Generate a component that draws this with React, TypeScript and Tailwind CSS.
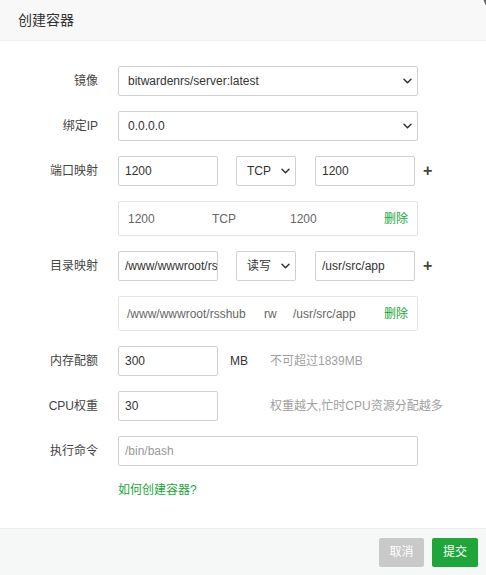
import React from 'react';

const Chevron = () => (
  <svg className="pointer-events-none absolute right-[6px] top-1/2 -translate-y-1/2" width="9" height="6" viewBox="0 0 9 6" fill="none">
    <path d="M1 1.2 4.5 4.7 8 1.2" stroke="#333" strokeWidth="1.5" strokeLinecap="round" strokeLinejoin="round" />
  </svg>
);

const Select = ({ value, width, pad = 'pl-[9px]' }: { value: string; width: string; pad?: string }) => (
  <div className={`relative ${width} h-[30px] shrink-0`}>
    <select
      defaultValue={value}
      className={`h-full w-full appearance-none rounded-[2px] border border-[#d0d0d0] bg-white ${pad} text-[12px] text-[#333] outline-none`}
    >
      <option value={value}>{value}</option>
    </select>
    <Chevron />
  </div>
);

const Input = ({ value, placeholder, width }: { value?: string; placeholder?: string; width: string }) => (
  <input
    defaultValue={value}
    placeholder={placeholder}
    className={`${width} h-[30px] shrink-0 rounded-[2px] border border-[#d0d0d0] bg-white pl-[6px] text-[12px] text-[#333] outline-none placeholder:text-[#999]`}
  />
);

const Row = ({ label, children }: { label?: string; children: React.ReactNode }) => (
  <div className="flex items-center">
    <label className="w-[98px] shrink-0 text-right text-[12px] text-[#444]">{label}</label>
    <div className="ml-[20px] flex items-center">{children}</div>
  </div>
);

export default function App() {
  return (
    <div
      className="relative flex h-[575px] w-[486px] flex-col overflow-hidden bg-white"
      style={{ fontFamily: '"Liberation Sans", "Noto Sans CJK SC", sans-serif' }}
    >
      {/* close button peeking from corner */}
      <div className="absolute left-[481px] top-[-27px] h-[44px] w-[44px] rounded-full border-2 border-white bg-[#666]" />

      <div className="flex h-[41px] shrink-0 items-center border-b border-[#eee] bg-[#f8f8f8] pl-[18px] text-[14px] text-[#333]">
        创建容器
      </div>

      <div className="flex flex-1 flex-col gap-[15px] pt-[25px]">
        <Row label="镜像">
          <Select value="bitwardenrs/server:latest" width="w-[300px]" />
        </Row>
        <Row label="绑定IP">
          <Select value="0.0.0.0" width="w-[300px]" />
        </Row>
        <Row label="端口映射">
          <Input value="1200" width="w-[100px]" />
          <div className="ml-[18px]">
            <Select value="TCP" width="w-[60px]" pad="pl-[10px]" />
          </div>
          <div className="ml-[19px]">
            <Input value="1200" width="w-[100px]" />
          </div>
          <span className="ml-[8px] text-[16px] font-bold text-[#444]">+</span>
        </Row>
        <Row>
          <div className="flex h-[35px] w-[300px] items-center rounded-[2px] border border-[#e4e4e4] pl-[9px] pr-[9px] text-[12px] text-[#666]">
            <span className="w-[84px]">1200</span>
            <span className="w-[78px]">TCP</span>
            <span>1200</span>
            <span className="ml-auto text-[#20a53a]">删除</span>
          </div>
        </Row>
        <Row label="目录映射">
          <Input value="/www/wwwroot/rsshub" width="w-[100px]" />
          <div className="ml-[18px]">
            <Select value="读写" width="w-[60px]" pad="pl-[10px]" />
          </div>
          <div className="ml-[19px]">
            <Input value="/usr/src/app" width="w-[100px]" />
          </div>
          <span className="ml-[8px] text-[16px] font-bold text-[#444]">+</span>
        </Row>
        <Row>
          <div className="flex h-[35px] w-[300px] items-center rounded-[2px] border border-[#e4e4e4] pl-[8px] pr-[9px] text-[12px] text-[#666]">
            <span className="w-[137px]">/www/wwwroot/rsshub</span>
            <span className="w-[29px]">rw</span>
            <span>/usr/src/app</span>
            <span className="ml-auto text-[#20a53a]">删除</span>
          </div>
        </Row>
        <Row label="内存配额">
          <Input value="300" width="w-[100px]" />
          <span className="ml-[12px] w-[40px] text-[12px] text-[#333]">MB</span>
          <span className="text-[12px] text-[#a0a0a0]">不可超过1839MB</span>
        </Row>
        <Row label="CPU权重">
          <Input value="30" width="w-[100px]" />
          <span className="ml-[52px] text-[12px] text-[#a0a0a0]">权重越大,忙时CPU资源分配越多</span>
        </Row>
        <Row label="执行命令">
          <Input placeholder="/bin/bash" width="w-[300px]" />
        </Row>
        <Row>
          <a className="text-[12px] text-[#20a53a]">如何创建容器?</a>
        </Row>
      </div>

      <div className="flex h-[47px] shrink-0 items-center justify-end gap-[8px] border-t border-[#eee] bg-[#f6f8f8] pr-[8px]">
        <button className="h-[29px] w-[45px] rounded-[2px] bg-[#c9c9c9] text-[12px] text-white">取消</button>
        <button className="h-[29px] w-[46px] rounded-[2px] bg-[#20a53a] text-[12px] text-white">提交</button>
      </div>
    </div>
  );
}
